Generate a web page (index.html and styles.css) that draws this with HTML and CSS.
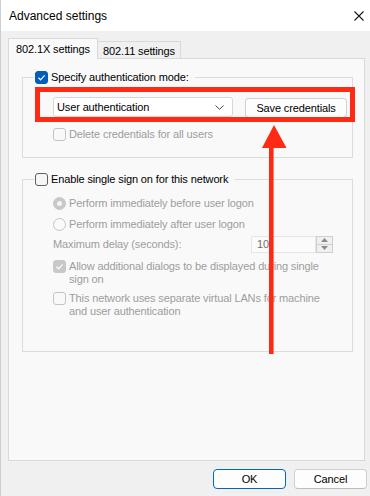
FILE: index.html
```html
<!DOCTYPE html>
<html>
<head>
<meta charset="utf-8">
<link rel="stylesheet" href="styles.css">
</head>
<body>
<div class="window">
  <div class="titlebar">
    <span class="title">Advanced settings</span>
    <svg class="close" width="10" height="10" viewBox="0 0 10 10"><path d="M0.5 0.5 L9.5 9.5 M9.5 0.5 L0.5 9.5" stroke="#1a1a1a" stroke-width="1.1" fill="none"/></svg>
  </div>
  <div class="body">
    <div class="tabs">
      <div class="tab active">802.1X settings</div>
      <div class="tab">802.11 settings</div>
    </div>
    <div class="panel">
      <fieldset class="group g1">
        <legend class="legend">
          <span class="cb checked"><svg width="11" height="11" viewBox="0 0 11 11"><path d="M2.5 5.8 L4.6 7.8 L8.6 3.4" stroke="#fff" stroke-width="1.2" fill="none"/></svg></span>
          <span>Specify authentication mode:</span>
        </legend>
        <div class="auth-row">
          <div class="combo">
            <span>User authentication</span>
            <svg width="9" height="5" viewBox="0 0 9 5"><path d="M0.5 0.5 L4.5 4.3 L8.5 0.5" stroke="#444" stroke-width="1" fill="none"/></svg>
          </div>
          <button class="btn save">Save credentials</button>
          <div class="highlight"></div>
        </div>
        <div class="opt disabled first-opt"><span class="cb dis"></span><span>Delete credentials for all users</span></div>
      </fieldset>

      <fieldset class="group g2">
        <legend class="legend">
          <span class="cb"></span>
          <span>Enable single sign on for this network</span>
        </legend>
        <div class="opt disabled r1"><span class="radio sel"></span><span>Perform immediately before user logon</span></div>
        <div class="opt disabled r2"><span class="radio"></span><span>Perform immediately after user logon</span></div>
        <div class="delay-row disabled">
          <span class="delay-label">Maximum delay (seconds):</span>
          <div class="spin">
            <span class="spin-field">10</span>
            <span class="spin-btns">
              <span class="spin-btn"><svg width="7" height="4" viewBox="0 0 7 4"><path d="M0 4 L3.5 0 L7 4 Z" fill="#8a8a8a"/></svg></span>
              <span class="spin-btn"><svg width="7" height="4" viewBox="0 0 7 4"><path d="M0 0 L3.5 4 L7 0 Z" fill="#8a8a8a"/></svg></span>
            </span>
          </div>
        </div>
        <div class="opt disabled multi allow"><span class="cb dis checked-dis"><svg width="11" height="11" viewBox="0 0 11 11"><path d="M2.5 5.8 L4.6 7.8 L8.6 3.4" stroke="#fff" stroke-width="1.2" fill="none"/></svg></span><span>Allow additional dialogs to be displayed during single<br>sign on</span></div>
        <div class="opt disabled multi vlan"><span class="cb dis"></span><span>This network uses separate virtual LANs for machine<br>and user authentication</span></div>
      </fieldset>

      <svg class="arrow" width="28" height="232" viewBox="0 0 28 232">
        <rect x="9" y="18" width="4.6" height="212" fill="#fe2a14"/>
        <path d="M2 24 L14 1 L26.5 24 Z" fill="#fe2a14"/>
      </svg>
    </div>
    <div class="footer">
      <button class="btn default">OK</button>
      <button class="btn">Cancel</button>
    </div>
  </div>
</div>
</body>
</html>
```
FILE: styles.css
```css
* { box-sizing: border-box; }
html, body { margin: 0; padding: 0; }
body {
  font-family: "Liberation Sans", Arial, sans-serif;
  font-size: 11px;
  letter-spacing: -0.13px;
  color: #000;
  background: #f0f0f0;
}
.window {
  width: 370px;
  height: 496px;
  background: #f0f0f0;
  overflow: hidden;
  border-left: 1px solid #cfcfcf;
}
.titlebar {
  height: 31px;
  background: #fff;
  display: flex;
  align-items: center;
  justify-content: space-between;
  padding: 0 6px 0 8px;
}
.title { font-size: 12px; letter-spacing: 0; color: #000; }
.body { padding: 7px 5px 0 7px; }
.tabs { display: flex; align-items: flex-end; height: 20px; position: relative; z-index: 2; }
.tab {
  height: 17px;
  width: 83px;
  display: flex;
  align-items: center;
  justify-content: center;
  background: #f0f0f0;
  border: 1px solid #d9d9d9;
  border-left: none;
  border-bottom: none;
  padding-top: 1px;
}
.tab.active {
  width: 90px;
  height: 21px;
  margin-bottom: -1px;
  background: #f9f9f9;
  border-left: 1px solid #d9d9d9;
  padding-top: 0;
}
.panel {
  position: relative;
  width: 357px;
  height: 403px;
  background: #f9f9f9;
  border: 1px solid #d9d9d9;
  padding: 10px 11px 0 13px;
}
.group {
  margin: 0;
  border: 1px solid #dcdcdc;
  padding: 0 0 0 11px;
  min-width: 0;
}
.g1 { padding-bottom: 15px; }
.g2 { margin-top: 13px; padding-bottom: 33px; }
.legend {
  display: flex;
  align-items: center;
  gap: 3px;
  padding: 0 6px 0 1px;
  line-height: 16px;
  height: 16px;
}
.cb {
  width: 13px;
  height: 13px;
  flex: none;
  border-radius: 3px;
  border: 1px solid #5f5f5f;
  background: #f6f6f6;
  display: flex;
  align-items: center;
  justify-content: center;
}
.cb svg { display: block; }
.cb.checked { background: #005fb8; border-color: #005fb8; }
.cb.dis { border-color: #c4c4c4; background: transparent; }
.cb.checked-dis { background: #c8c8c8; border-color: #c8c8c8; }
.radio {
  width: 13px;
  height: 13px;
  flex: none;
  border-radius: 50%;
  border: 1px solid #c4c4c4;
  display: flex;
  align-items: center;
  justify-content: center;
}
.radio.sel { background: #c8c8c8; border-color: #c8c8c8; }
.radio.sel::after {
  content: "";
  width: 5px;
  height: 5px;
  border-radius: 50%;
  background: #f4f4f4;
}
.auth-row {
  position: relative;
  display: flex;
  align-items: center;
  gap: 12px;
  margin: 12px 0 0 19px;
  width: 294px;
  height: 20px;
}
.combo {
  width: 180px;
  height: 20px;
  background: #fff;
  border: 1px solid #d6d6d6;
  border-radius: 3px;
  display: flex;
  align-items: center;
  justify-content: space-between;
  padding: 0 8px 0 3px;
}
.combo svg { display: block; }
.btn {
  font-family: inherit;
  font-size: 11px;
  letter-spacing: -0.13px;
  color: #000;
  height: 20px;
  background: #fdfdfd;
  border: 1px solid #d0d0d0;
  border-bottom-color: #bdbdbd;
  border-radius: 4px;
  padding: 0;
  margin: 0;
}
.save { width: 102px; height: 20px; margin-top: 1px; }
.highlight {
  position: absolute;
  left: -18px;
  top: -10px;
  right: -8px;
  bottom: -5px;
  border: 5px solid #fe2a14;
  pointer-events: none;
}
.opt {
  display: flex;
  align-items: center;
  gap: 3px;
  line-height: 16px;
  margin-left: 19px;
}
.disabled { color: #9d9d9d; }
.first-opt { margin-top: 9px; }
.r1 { margin-top: 8px; }
.r2 { margin-top: 5px; }
.opt.multi { align-items: flex-start; line-height: 13px; }
.allow { margin-top: 8px; }
.vlan { margin-top: 6px; }
.delay-row {
  display: flex;
  align-items: center;
  margin: 4px 0 0 19px;
  height: 16px;
}
.delay-label { width: 198px; }
.spin { display: flex; height: 17px; }
.spin-field {
  width: 65px;
  height: 17px;
  border: 1px solid #e6e6e6;
  background: #fbfbfb;
  color: #6d6d6d;
  padding-left: 5px;
  line-height: 15px;
}
.spin-btns {
  width: 17px;
  height: 17px;
  display: flex;
  flex-direction: column;
  border: 1px solid #cfcfcf;
  background: #f0f0f0;
}
.spin-btn {
  flex: 1;
  display: flex;
  align-items: center;
  justify-content: center;
}
.spin-btn + .spin-btn { border-top: 1px solid #cfcfcf; }
.spin-btn svg { display: block; }
.arrow {
  position: absolute;
  left: 251px;
  top: 65px;
}
.footer {
  display: flex;
  justify-content: flex-end;
  gap: 8px;
  margin: 8px -5px 0 0;
  padding-right: 3px;
}
.footer .btn { width: 73px; }
.btn.default { border-color: #0067c0; }
```
